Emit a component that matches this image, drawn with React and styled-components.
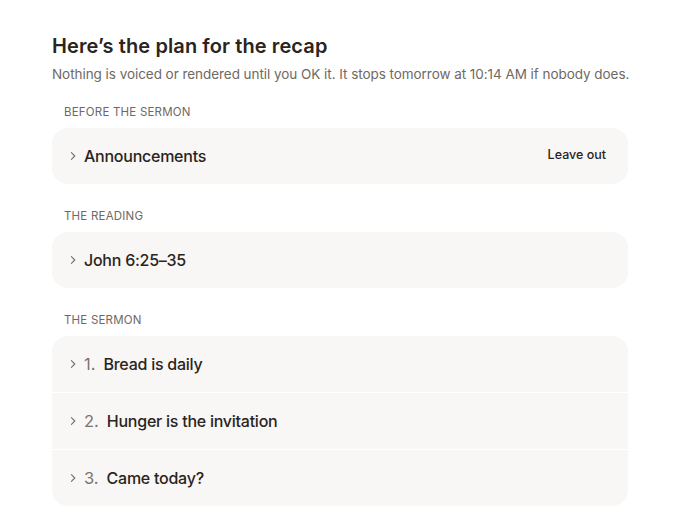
import React from "react";
import styled, { createGlobalStyle } from "styled-components";

const GlobalStyle = createGlobalStyle`
  body {
    margin: 0;
    background: #ffffff;
    font-family: Inter, "Noto Sans", sans-serif;
    color: #2a2420;
  }
`;

const sections = [
  {
    label: "Before the sermon",
    rows: [{ title: "Announcements", action: "Leave out" }],
  },
  {
    label: "The reading",
    rows: [{ title: "John 6:25–35" }],
  },
  {
    label: "The sermon",
    rows: [
      { num: "1.", title: "Bread is daily" },
      { num: "2.", title: "Hunger is the invitation" },
      { num: "3.", title: "Came today?" },
    ],
  },
];

const Chevron = () => (
  <ChevronSvg viewBox="0 0 10 10" width="10" height="10">
    <path d="M3.4 1.6 L6.8 5 L3.4 8.4" fill="none" stroke="#77716b" strokeWidth="1.1" strokeLinecap="round" strokeLinejoin="round" />
  </ChevronSvg>
);

const App = () => {
  return (
    <Page>
      <GlobalStyle />
      <Title>Here’s the plan for the recap</Title>
      <Subtitle>
        Nothing is voiced or rendered until you OK it. It stops tomorrow at 10:14 AM if nobody does.
      </Subtitle>
      {sections.map((s) => (
        <Section key={s.label}>
          <Label>{s.label}</Label>
          <Card>
            {s.rows.map((r) => (
              <Row key={r.title}>
                <Chevron />
                {r.num && <Num>{r.num}</Num>}
                <RowTitle>{r.title}</RowTitle>
                {r.action && <Action>{r.action}</Action>}
              </Row>
            ))}
          </Card>
        </Section>
      ))}
    </Page>
  );
};

export default App;

const Page = styled.div`
  width: 576px;
  padding: 34px 52px 0;
`;

const Title = styled.h1`
  margin: 0;
  font-size: 20px;
  line-height: 25px;
  font-weight: 600;
  letter-spacing: 0.1px;
  color: #2a2420;
`;

const Subtitle = styled.p`
  margin: 6px 0 0;
  font-size: 13.5px;
  line-height: 18px;
  color: #6f6963;
  letter-spacing: -0.05px;
  white-space: nowrap;
`;

const Section = styled.section`
  margin-top: 21px;

  & + & {
    margin-top: 24px;
  }
`;

const Label = styled.div`
  padding-left: 12px;
  font-size: 11.5px;
  line-height: 16px;
  text-transform: uppercase;
  letter-spacing: 0.2px;
  color: #6f6963;
  margin-bottom: 8px;
`;

const Card = styled.div`
  background: #f8f7f5;
  border-radius: 16px;
  overflow: hidden;
`;

const Row = styled.div`
  display: flex;
  align-items: center;
  height: 56px;
  padding: 0 22px 0 16px;

  & + & {
    border-top: 1px solid #ffffff;
  }
`;

const ChevronSvg = styled.svg`
  flex: none;
  margin-right: 6px;
`;

const Num = styled.span`
  font-size: 16.5px;
  color: #7a746e;
  margin-right: 8px;
`;

const RowTitle = styled.span`
  flex: 1;
  font-size: 16px;
  font-weight: 500;
  letter-spacing: -0.25px;
  color: #2a2420;
`;

const Action = styled.button`
  border: none;
  background: none;
  padding: 0;
  margin-bottom: 4px;
  font-family: inherit;
  font-size: 12.5px;
  font-weight: 500;
  color: #2a2420;
  cursor: pointer;
`;
